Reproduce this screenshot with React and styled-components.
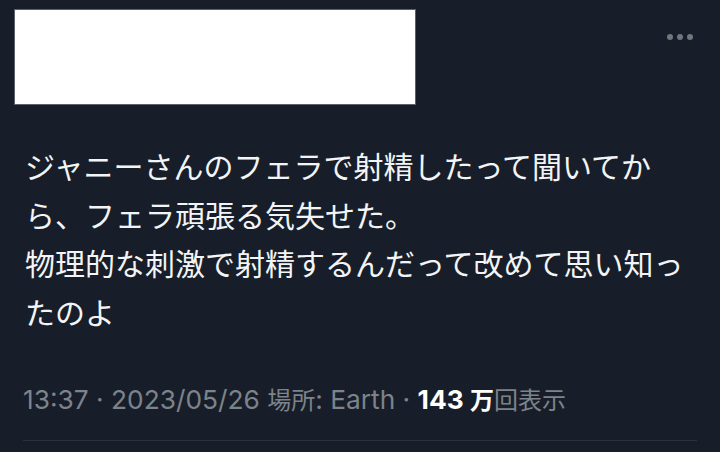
import React from "react";
import styled, { createGlobalStyle } from "styled-components";

const GlobalStyle = createGlobalStyle`
  html, body {
    margin: 0;
    padding: 0;
    background: #171e29;
  }
`;

const Page = styled.div`
  width: 720px;
  height: 452px;
  overflow: hidden;
  background: #171e29;
  box-sizing: border-box;
  padding: 10px 23px 0 15px;
  display: flex;
  flex-direction: column;
  font-family: "Inter", "Noto Sans CJK JP", sans-serif;
`;

const Header = styled.div`
  display: flex;
  justify-content: space-between;
  align-items: flex-start;
`;

// redacted user block (white box in the screenshot)
const Redacted = styled.div`
  width: 400px;
  height: 94px;
  background: #ffffff;
  box-shadow: 0 0 0 1px #5b606a;
`;

const More = styled.div`
  display: flex;
  gap: 4px;
  margin-top: 24px;
  margin-right: 4px;
`;

const Dot = styled.span`
  width: 6px;
  height: 6px;
  border-radius: 50%;
  background: #71767b;
`;

const Body = styled.p`
  margin: 37px 0 0 10px;
  width: 665px;
  color: #f2f4f6;
  font-family: "Noto Sans CJK JP", sans-serif;
  font-size: 30px;
  line-height: 48.5px;
  font-weight: 400;
  line-break: strict;
`;

const Meta = styled.div`
  margin: 48px 0 0 8px;
  color: #7d838b;
  font-size: 26.3px;
  line-height: 32px;
  white-space: nowrap;
`;

const Strong = styled.span`
  color: #ffffff;
  font-weight: 700;
`;

const Cjk = styled.span`
  font-family: "Noto Sans CJK JP", sans-serif;
  font-size: 24px;
  font-weight: ${(p) => (p.$bold ? 700 : 400)};
`;

const Divider = styled.div`
  margin: 24px 0 0 8px;
  height: 1px;
  background: #2c323b;
`;

const App = () => {
  return (
    <>
      <GlobalStyle />
      <Page>
        <Header>
          <Redacted />
          <More>
            <Dot />
            <Dot />
            <Dot />
          </More>
        </Header>
        <Body>
          ジャニーさんのフェラで射精したって聞いてから、フェラ頑張る気失せた。
          <br />
          物理的な刺激で射精するんだって改めて思い知ったのよ
        </Body>
        <Meta>
          13:37 · 2023/05/26 <Cjk>場所</Cjk>: Earth ·{" "}
          <Strong>
            143 <Cjk $bold>万</Cjk>
          </Strong>
          <Cjk>回表示</Cjk>
        </Meta>
        <Divider />
      </Page>
    </>
  );
};

export default App;
